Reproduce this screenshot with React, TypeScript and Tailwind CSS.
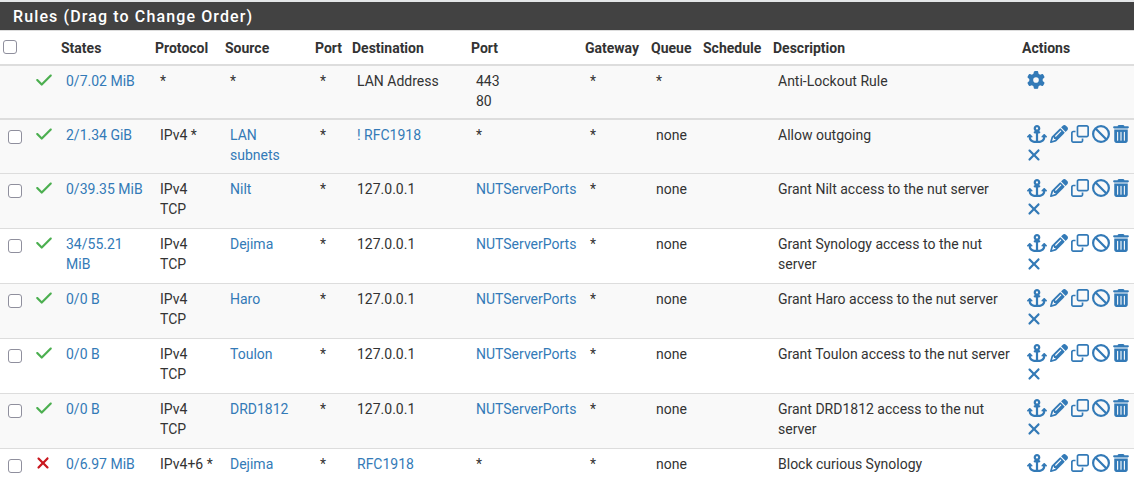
import React from "react";
import { FaBan, FaGear, FaPencil, FaRegClone } from "react-icons/fa6";

type Rule = {
  pass: boolean;
  states: string;
  protocol: string[];
  source: string;
  destination: string;
  destLinked?: boolean;
  port: string;
  description: string;
  clearable: boolean;
};

const rules: Rule[] = [
  { pass: true, states: "2/1.34 GiB", protocol: ["IPv4 *"], source: "LAN subnets", destination: "! RFC1918", destLinked: true, port: "*", description: "Allow outgoing", clearable: true },
  { pass: true, states: "0/39.35 MiB", protocol: ["IPv4", "TCP"], source: "Nilt", destination: "127.0.0.1", port: "NUTServerPorts", description: "Grant Nilt access to the nut server", clearable: true },
  { pass: true, states: "34/55.21 MiB", protocol: ["IPv4", "TCP"], source: "Dejima", destination: "127.0.0.1", port: "NUTServerPorts", description: "Grant Synology access to the nut server", clearable: true },
  { pass: true, states: "0/0 B", protocol: ["IPv4", "TCP"], source: "Haro", destination: "127.0.0.1", port: "NUTServerPorts", description: "Grant Haro access to the nut server", clearable: true },
  { pass: true, states: "0/0 B", protocol: ["IPv4", "TCP"], source: "Toulon", destination: "127.0.0.1", port: "NUTServerPorts", description: "Grant Toulon access to the nut server", clearable: true },
  { pass: true, states: "0/0 B", protocol: ["IPv4", "TCP"], source: "DRD1812", destination: "127.0.0.1", port: "NUTServerPorts", description: "Grant DRD1812 access to the nut server", clearable: true },
  { pass: false, states: "0/6.97 MiB", protocol: ["IPv4+6 *"], source: "Dejima", destination: "RFC1918", destLinked: true, port: "*", description: "Block curious Synology", clearable: false },
];

const headings = ["States", "Protocol", "Source", "Port", "Destination", "Port", "Gateway", "Queue", "Schedule", "Description", "Actions"];

function Anchor() {
  return (
    <svg viewBox="0 0 576 512" fill="currentColor" className="h-[18px] w-[20px]">
      <path d="M320 96a32 32 0 1 1 -64 0 32 32 0 1 1 64 0zm21.1 80C367 158.8 384 129.4 384 96c0-53-43-96-96-96s-96 43-96 96c0 33.4 17 62.8 42.9 80H224c-17.7 0-32 14.3-32 32s14.3 32 32 32h32V448H208c-53 0-96-43-96-96v-6.1l7 7c9.4 9.4 24.6 9.4 33.9 0s9.4-24.6 0-33.9L97 263c-9.4-9.4-24.6-9.4-33.9 0L7 319c-9.4 9.4-9.4 24.6 0 33.9s24.6 9.4 33.9 0l7-7V352c0 88.4 71.6 160 160 160h160c88.4 0 160-71.6 160-160v-6.1l7 7c9.4 9.4 24.6 9.4 33.9 0s9.4-24.6 0-33.9l-56-56c-9.4-9.4-24.6-9.4-33.9 0l-56 56c-9.4 9.4-9.4 24.6 0 33.9s24.6 9.4 33.9 0l7-7V352c0 53-43 96-96 96H320V240h32c17.7 0 32-14.3 32-32s-14.3-32-32-32H341.1z" />
    </svg>
  );
}

function Trash() {
  return (
    <svg viewBox="0 0 448 512" fill="currentColor" className="h-[18px] w-[16px]">
      <path d="M135.2 17.7L128 32H32C14.3 32 0 46.3 0 64S14.3 96 32 96H416c17.7 0 32-14.3 32-32s-14.3-32-32-32H320l-7.2-14.3C307.4 6.8 296.3 0 284.2 0H163.8c-12.1 0-23.2 6.8-28.6 17.7zM32 128V448c0 35.3 28.7 64 64 64H352c35.3 0 64-28.7 64-64V128H32zm96 64c8.8 0 16 7.2 16 16V432c0 8.8-7.2 16-16 16s-16-7.2-16-16V208c0-8.8 7.2-16 16-16zm96 0c8.8 0 16 7.2 16 16V432c0 8.8-7.2 16-16 16s-16-7.2-16-16V208c0-8.8 7.2-16 16-16zm96 0c8.8 0 16 7.2 16 16V432c0 8.8-7.2 16-16 16s-16-7.2-16-16V208c0-8.8 7.2-16 16-16z" />
    </svg>
  );
}

function Check() {
  return (
    <svg viewBox="0 0 448 512" fill="currentColor" className="h-[18px] w-[16px] text-[#4caf50]">
      <path d="M438.6 105.4c12.5 12.5 12.5 32.8 0 45.3l-256 256c-12.5 12.5-32.8 12.5-45.3 0l-128-128c-12.5-12.5-12.5-32.8 0-45.3s32.8-12.5 45.3 0L160 338.7 393.4 105.4c12.5-12.5 32.8-12.5 45.3 0z" />
    </svg>
  );
}

function Cross() {
  return (
    <svg viewBox="0 0 384 512" fill="currentColor" className="h-[18px] w-[14px]">
      <path d="M342.6 150.6c12.5-12.5 12.5-32.8 0-45.3s-32.8-12.5-45.3 0L192 210.7 86.6 105.4c-12.5-12.5-32.8-12.5-45.3 0s-12.5 32.8 0 45.3L146.7 256 41.4 361.4c-12.5 12.5-12.5 32.8 0 45.3s32.8 12.5 45.3 0L192 301.3 297.4 406.6c12.5 12.5 32.8 12.5 45.3 0s12.5-32.8 0-45.3L237.3 256 342.6 150.6z" />
    </svg>
  );
}

function Link({ children, label }: { children: React.ReactNode; label?: string }) {
  return (
    <a href="#" aria-label={label} className="text-[#337ab7]">
      {children}
    </a>
  );
}

function Cell({ children }: { children?: React.ReactNode }) {
  return <td className="pt-[5px] pl-[10px] align-top">{children}</td>;
}

function Tick({ label }: { label: string }) {
  return (
    <input
      type="checkbox"
      aria-label={label}
      className="block size-[14px] appearance-none rounded-[3px] border border-[#8f8f9d] bg-white checked:bg-[#337ab7]"
    />
  );
}

function Actions({ clearable }: { clearable: boolean }) {
  return (
    <div className="flex flex-wrap gap-[3px]">
      <Link label="Move rule"><Anchor /></Link>
      <Link label="Edit"><FaPencil className="size-[18px]" /></Link>
      <Link label="Copy"><FaRegClone className="size-[18px]" /></Link>
      <Link label="Disable"><FaBan className="size-[18px]" /></Link>
      <Link label="Delete"><Trash /></Link>
      {clearable && <Link label="Clear states"><Cross /></Link>}
    </div>
  );
}

export default function App() {
  return (
    <main className="border-t-2 border-[#e4e6e8] bg-white font-['Roboto','Liberation_Sans',sans-serif] text-[14px] leading-5 text-[#333]">
      <h2 className="bg-[#424242] px-[13px] pt-[5px] pb-[3px] text-[16px] leading-5 font-medium tracking-[0.07em] text-white">
        Rules (Drag to Change Order)
      </h2>
      <table className="w-full table-fixed border-collapse border-t border-[#ddd] text-left">
        <colgroup>
          <col className="w-[26px]" />
          <col className="w-[30px]" />
          <col className="w-[94px]" />
          <col className="w-[70px]" />
          <col className="w-[90px]" />
          <col className="w-[37px]" />
          <col className="w-[119px]" />
          <col className="w-[114px]" />
          <col className="w-[66px]" />
          <col className="w-[52px]" />
          <col className="w-[70px]" />
          <col />
          <col className="w-[117px]" />
        </colgroup>
        <thead>
          <tr className="h-[34px]">
            <th className="pl-[3px]"><Tick label="Select all" /></th>
            <th aria-label="Status" />
            {headings.map((h, i) => (
              <th key={i} className="pt-[2px] pl-[5px] font-bold">{h}</th>
            ))}
          </tr>
        </thead>
        <tbody className="border-y-2 border-[#ddd] bg-[#f9f9f9]">
          <tr className="h-[54px]">
            <Cell />
            <Cell><Check /></Cell>
            <Cell><Link>0/7.02 MiB</Link></Cell>
            <Cell>*</Cell>
            <Cell>*</Cell>
            <Cell>*</Cell>
            <Cell>LAN Address</Cell>
            <Cell>443<br />80</Cell>
            <Cell>*</Cell>
            <Cell>*</Cell>
            <Cell />
            <Cell>Anti-Lockout Rule</Cell>
            <Cell><Link label="Settings"><FaGear className="size-[18px]" /></Link></Cell>
          </tr>
        </tbody>
        <tbody>
          {rules.map((r, i) => (
            <tr key={i} className="h-[55px] border-b border-[#ddd] bg-white first:bg-[#f9f9f9] last:h-8 last:border-b-0 even:bg-[#f9f9f9]">
              <td className="pt-[10px] pl-2 align-top"><Tick label={r.description} /></td>
              <Cell>
                {r.pass ? <Check /> : <div className="text-[#c9171e]"><Cross /></div>}
              </Cell>
              <Cell><Link>{r.states}</Link></Cell>
              <Cell>{r.protocol.map((line) => <div key={line}>{line}</div>)}</Cell>
              <Cell><Link>{r.source}</Link></Cell>
              <Cell>*</Cell>
              <Cell>{r.destLinked ? <Link>{r.destination}</Link> : r.destination}</Cell>
              <Cell>{r.port === "*" ? "*" : <Link>{r.port}</Link>}</Cell>
              <Cell>*</Cell>
              <Cell>none</Cell>
              <Cell />
              <Cell>{r.description}</Cell>
              <Cell><Actions clearable={r.clearable} /></Cell>
            </tr>
          ))}
        </tbody>
      </table>
    </main>
  );
}
